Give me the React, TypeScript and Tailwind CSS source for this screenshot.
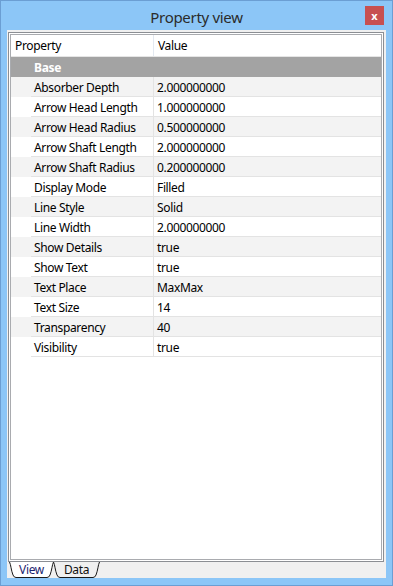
const rows: [string, string][] = [
  ["Absorber Depth", "2.000000000"],
  ["Arrow Head Length", "1.000000000"],
  ["Arrow Head Radius", "0.500000000"],
  ["Arrow Shaft Length", "2.000000000"],
  ["Arrow Shaft Radius", "0.200000000"],
  ["Display Mode", "Filled"],
  ["Line Style", "Solid"],
  ["Line Width", "2.000000000"],
  ["Show Details", "true"],
  ["Show Text", "true"],
  ["Text Place", "MaxMax"],
  ["Text Size", "14"],
  ["Transparency", "40"],
  ["Visibility", "true"],
];

function Tab({ label, active, width }: { label: string; active?: boolean; width: number }) {
  return (
    <div className="relative h-[16px] flex items-center justify-center" style={{ width }}>
      <svg className="absolute inset-0" width={width} height={16} viewBox={`0 0 ${width} 16`}>
        <path
          d={`M0.5 0 C2 3 2 8 4 13 Q5 15.5 7 15.5 L${width - 7} 15.5 Q${width - 5} 15.5 ${width - 4} 13 C${width - 2} 8 ${width - 2} 3 ${width - 0.5} 0`}
          fill={active ? "#ffffff" : "#f0f0f0"}
          stroke="#1a1a1a"
          strokeWidth="1"
        />
      </svg>
      <span className={`relative text-[12px] leading-none ${active ? "text-[#1c2570]" : "text-[#111]"}`}>{label}</span>
    </div>
  );
}

export default function App() {
  return (
    <div className="w-[393px] h-[586px] bg-[#8cc6f7] border border-[#6b9ed3] flex flex-col font-['Noto_Sans',sans-serif] text-[12px] tracking-[-0.35px] text-black">
      <div className="h-[29px] relative flex items-center justify-center shrink-0">
        <span className="text-[15px] text-[#2b2b2b] leading-none mt-[3px] tracking-[-0.3px]">Property view</span>
        <div className="absolute right-[8px] top-[5px] w-[19px] h-[19px] bg-[#c75050] flex items-center justify-center text-white text-[11px] font-bold leading-none tracking-normal">
          x
        </div>
      </div>
      <div className="flex-1 mx-[6px] mb-[7px] bg-[#f0f0f0] pt-[2px] pl-[1px] pr-[2px] flex flex-col">
        <div className="flex-1 border border-[#8b8e93] bg-white p-px flex flex-col">
          <div className="flex-1 border border-[#a9abaf] bg-white">
            <div className="h-[22px] flex border-b border-[#e5e5e5]">
              <div className="w-[143px] pl-[4px] pt-px flex items-center border-r border-[#e3e9f1]">Property</div>
              <div className="flex-1 pl-[4px] pt-px flex items-center">Value</div>
            </div>
            <div className="h-[20px] bg-[#a3a3a3] pl-[23px] pt-px flex items-center text-white font-bold">Base</div>
            {rows.map(([k, v], i) => (
              <div key={k} className={`flex h-[20px] ${i % 2 === 0 ? "bg-[#f3f3f3]" : "bg-white"}`}>
                <div className="w-[20px]" />
                <div className="flex-1 flex border-b border-[#e3e3e3]">
                  <div className="w-[123px] pl-[3px] pt-[2px] flex items-center border-r border-[#e3e3e3] whitespace-nowrap">{k}</div>
                  <div className="flex-1 pl-[3px] pt-[2px] flex items-center">{v}</div>
                </div>
              </div>
            ))}
          </div>
        </div>
        <div className="h-[16px] flex pl-[1px]">
          <Tab label="View" active width={45} />
          <div className="-ml-[1px]">
            <Tab label="Data" width={47} />
          </div>
        </div>
      </div>
    </div>
  );
}
